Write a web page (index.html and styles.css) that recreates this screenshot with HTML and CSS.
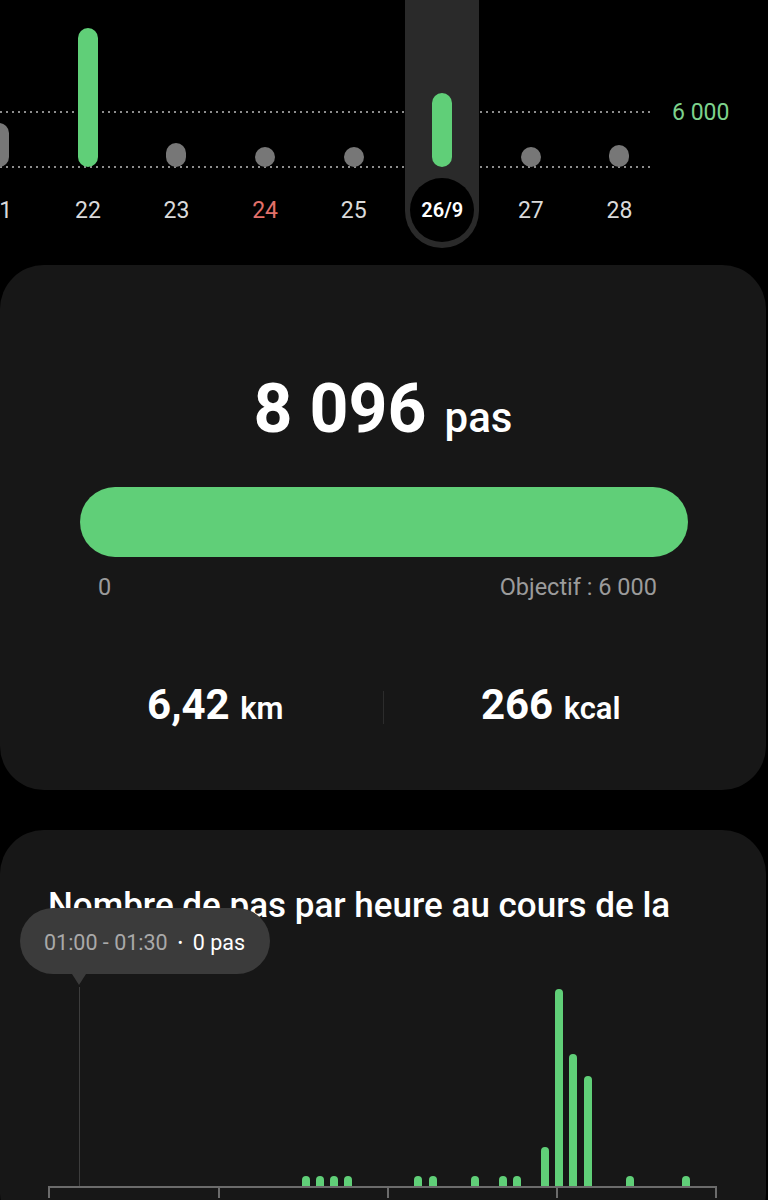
FILE: index.html
```html
<!DOCTYPE html>
<html lang="fr">
<head>
	<meta charset="UTF-8">
	<title>Pas</title>
	<link rel="stylesheet" href="styles.css">
</head>

<body>
	<div class="week">
		<div class="week-line week-line-goal"></div>
		<div class="week-line week-line-base"></div>
		<span class="week-goal">6 000</span>

		<div class="week-days">
			<div class="day">
				<div class="day-track">
					<div class="day-slot"><i class="day-bar" style="height:44px"></i></div>
					<span class="day-label">21</span>
				</div>
			</div>
			<div class="day">
				<div class="day-track">
					<div class="day-slot"><i class="day-bar day-bar-done" style="height:139px"></i></div>
					<span class="day-label">22</span>
				</div>
			</div>
			<div class="day">
				<div class="day-track">
					<div class="day-slot"><i class="day-bar" style="height:24px"></i></div>
					<span class="day-label">23</span>
				</div>
			</div>
			<div class="day">
				<div class="day-track">
					<div class="day-slot"><i class="day-bar" style="height:20px"></i></div>
					<span class="day-label day-label-sunday">24</span>
				</div>
			</div>
			<div class="day">
				<div class="day-track">
					<div class="day-slot"><i class="day-bar" style="height:20px"></i></div>
					<span class="day-label">25</span>
				</div>
			</div>
			<div class="day">
				<div class="day-track day-track-active">
					<div class="day-slot"><i class="day-bar day-bar-done" style="height:74px"></i></div>
					<span class="day-label day-label-active">26/9</span>
				</div>
			</div>
			<div class="day">
				<div class="day-track">
					<div class="day-slot"><i class="day-bar" style="height:20px"></i></div>
					<span class="day-label">27</span>
				</div>
			</div>
			<div class="day">
				<div class="day-track">
					<div class="day-slot"><i class="day-bar" style="height:22px"></i></div>
					<span class="day-label">28</span>
				</div>
			</div>
		</div>
	</div>

	<div class="card card-summary">
		<div class="steps">8 096<span class="steps-unit">pas</span></div>

		<div class="progress"></div>
		<div class="progress-labels">
			<span>0</span>
			<span>Objectif : 6 000</span>
		</div>

		<div class="stats">
			<div class="stat">6,42 <span class="stat-unit">km</span></div>
			<div class="stat-divider"></div>
			<div class="stat">266 <span class="stat-unit">kcal</span></div>
		</div>
	</div>

	<div class="card card-hourly">
		<h2 class="card-title">Nombre de pas par heure au cours de la</h2>

		<div class="hourly">
			<div class="hourly-bars" id="hourlyBars"></div>
			<div class="hourly-axis">
				<span></span><span></span><span></span><span></span>
			</div>

			<div class="hourly-cursor"></div>
			<div class="hourly-tip">
				<span class="hourly-tip-time">01:00 - 01:30</span>
				<span class="hourly-tip-dot">•</span>
				<span>0 pas</span>
			</div>
		</div>
	</div>

	<script>
		// pas par demi-heure (hauteur des barres en px)
		var halfHours = {
			18: 10, 19: 10, 20: 10, 21: 10,
			26: 10, 27: 10, 30: 10, 32: 10, 33: 10,
			35: 39, 36: 197, 37: 132, 38: 110,
			41: 10, 45: 10
		};

		var box = document.getElementById('hourlyBars');
		for (var i = 0; i < 48; i++) {
			var slot = document.createElement('span');
			slot.className = 'hour';
			if (halfHours[i]) {
				var bar = document.createElement('i');
				bar.style.height = halfHours[i] + 'px';
				slot.appendChild(bar);
			}
			box.appendChild(slot);
		}
	</script>
</body>
</html>
```

FILE: styles.css
```css
body {
	margin: 0;
	background: #000;
	color: #fff;
	font-family: Roboto, "Noto Sans", sans-serif;
	width: 768px;
}

/* semaine */
.week {
	position: relative;
	display: flow-root;
	height: 248px;
}

.week-line {
	position: absolute;
	left: 0;
	width: 651px;
	height: 2px;
	background: repeating-linear-gradient(to right, #8d8d8d 0 2px, transparent 2px 6px);
}

.week-line-goal {
	top: 111px;
}

.week-line-base {
	top: 166px;
}

.week-goal {
	position: absolute;
	left: 672px;
	top: 98px;
	font-size: 23px;
	line-height: 30px;
	color: #7dd28c;
}

.week-days {
	display: flex;
	margin: -60px 0 0 -45px;
}

.day {
	width: 88.6px;
	flex: none;
	display: flex;
	justify-content: center;
}

.day-track {
	position: relative;
	z-index: 1;
	width: 74px;
	padding-bottom: 6px;
	border-radius: 37px;
	display: flex;
	flex-direction: column;
	align-items: center;
}

.day-track-active {
	background: #2a2a2a;
}

.day-slot {
	height: 227px;
	display: flex;
	align-items: flex-end;
}

.day-bar {
	width: 20px;
	border-radius: 10px;
	background: #777;
}

.day-bar-done {
	background: #60cf78;
}

.day-label {
	margin-top: 11px;
	width: 64px;
	height: 64px;
	border-radius: 50%;
	display: flex;
	align-items: center;
	justify-content: center;
	font-size: 23px;
	color: #dadada;
}

.day-label-sunday {
	color: #e2706a;
}

.day-label-active {
	background: #000;
	color: #fff;
	font-size: 20px;
	font-weight: 600;
}

/* cartes */
.card {
	width: 766px;
	box-sizing: border-box;
	padding: 0 48px;
	background: #171717;
	border-radius: 44px;
}

.card-summary {
	margin-top: 17px;
	height: 525px;
	padding-top: 110px;
}

.steps {
	text-align: center;
	font-size: 68px;
	line-height: 68px;
	font-weight: 700;
}

.steps-unit {
	margin-left: 18px;
	font-size: 42px;
	font-weight: 500;
}

.progress {
	height: 70px;
	margin: 35px 30px 0 32px;
	border-radius: 35px;
	background: #60cf78;
}

.progress-labels {
	display: flex;
	justify-content: space-between;
	margin-top: 17px;
	padding: 0 61px 0 50px;
	font-size: 23.5px;
	line-height: 26px;
	color: #9b9b9b;
}

.stats {
	display: flex;
	align-items: center;
	margin-top: 81px;
}

.stat {
	flex: 1 1 0;
	text-align: center;
	font-size: 42px;
	line-height: 48px;
	font-weight: 700;
}

.stat-unit {
	font-size: 31px;
	font-weight: 600;
}

.stat-divider {
	width: 1px;
	height: 33px;
	background: #2c2c2c;
}

.card-hourly {
	margin-top: 40px;
	padding-top: 56px;
	padding-bottom: 40px;
}

.card-title {
	margin: 0;
	font-size: 35px;
	line-height: 40px;
	font-weight: 500;
	white-space: nowrap;
}

/* graphique par heure */
.hourly {
	position: relative;
	margin-top: 60px;
}

.hourly-bars {
	display: flex;
	align-items: flex-end;
	height: 200px;
}

.hour {
	width: 14.1px;
	flex: none;
}

.hour i {
	display: block;
	width: 8px;
	border-radius: 4px 4px 0 0;
	background: #60cf78;
}

.hourly-axis {
	display: flex;
}

.hourly-axis span {
	width: 170px;
	height: 12px;
	box-sizing: border-box;
	border-top: 2px solid #6b6b6b;
	border-left: 2px solid #6b6b6b;
}

.hourly-axis span:nth-child(2),
.hourly-axis span:nth-child(3) {
	width: 169px;
}

.hourly-axis span:last-child {
	width: 161px;
	border-right: 2px solid #6b6b6b;
}

.hourly-cursor {
	position: absolute;
	left: 31px;
	top: 1px;
	width: 1px;
	height: 199px;
	background: #3d3d3d;
}

.hourly-tip {
	position: absolute;
	left: -28px;
	top: -78px;
	width: 250px;
	height: 66px;
	box-sizing: border-box;
	padding: 3px 24px 0;
	border-radius: 33px;
	background: #3b3b3b;
	display: flex;
	align-items: center;
	gap: 10px;
	font-size: 21.5px;
	white-space: nowrap;
}

.hourly-tip::after {
	content: "";
	position: absolute;
	left: 52px;
	top: 66px;
	border-left: 7px solid transparent;
	border-right: 7px solid transparent;
	border-top: 11px solid #3b3b3b;
}

.hourly-tip-time {
	color: #a9a9a9;
}

.hourly-tip-dot {
	font-size: 15px;
}
```
